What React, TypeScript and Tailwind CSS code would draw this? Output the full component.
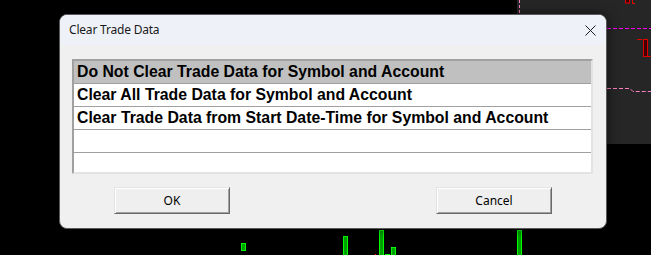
const rows = [
  "Do Not Clear Trade Data for Symbol and Account",
  "Clear All Trade Data for Symbol and Account",
  "Clear Trade Data from Start Date-Time for Symbol and Account",
  "",
];

function ChartBackdrop() {
  return (
    <svg
      className="absolute left-0 top-0"
      width={651}
      height={255}
      viewBox="0 0 651 255"
    >
      <line x1={519.5} y1={0} x2={519.5} y2={13} stroke="#ff80c0" strokeDasharray="3 2" />
      <line x1={607} y1={28.5} x2={651} y2={28.5} stroke="#ff00ff" strokeDasharray="4 2" />
      <polyline
        points="607,88.5 630,88.5 633,91.5 651,91.5"
        fill="none"
        stroke="#ff80c0"
        strokeDasharray="4 2"
      />
      {/* red candles */}
      <rect x={625.5} y={-2} width={4} height={5} fill="#400000" stroke="#e00000" />
      <line x1={632.5} y1={0} x2={632.5} y2={3} stroke="#e00000" />
      <line x1={632} y1={3.5} x2={635} y2={3.5} stroke="#e00000" />
      <line x1={637} y1={39.5} x2={642} y2={39.5} stroke="#e00000" />
      <rect x={643.5} y={39.5} width={4} height={17} fill="#400000" stroke="#e00000" />
      <line x1={648} y1={56.5} x2={651} y2={56.5} stroke="#e00000" />
      {/* volume bars */}
      <rect x={241.5} y={243.5} width={4} height={7} fill="#00a000" stroke="#00ff00" />
      <rect x={343.5} y={236.5} width={4} height={20} fill="#00a000" stroke="#00ff00" />
      <rect x={379.5} y={230.5} width={4} height={26} fill="#00a000" stroke="#00ff00" />
      <rect x={385.5} y={254.5} width={4} height={2} fill="#00a000" stroke="#00ff00" />
      <rect x={391.5} y={247.5} width={4} height={9} fill="#00a000" stroke="#00ff00" />
      <rect x={517.5} y={230.5} width={4} height={26} fill="#00a000" stroke="#00ff00" />
      <line x1={375.5} y1={254} x2={375.5} y2={255} stroke="#ff0000" />
    </svg>
  );
}

function WinButton({ label }: { label: string }) {
  return (
    <button className="w-[116px] h-[27px] bg-[#efefef] border border-t-[#e3e3e3] border-l-[#e3e3e3] border-b-[#696969] border-r-[#696969] shadow-[inset_1px_1px_0_#ffffff,inset_-1px_-1px_0_#a0a0a0] text-[12px] text-black font-['Noto_Sans',sans-serif] leading-none">
      {label}
    </button>
  );
}

export default function App() {
  return (
    <div className="relative w-[651px] h-[255px] bg-black overflow-hidden">
      <div className="absolute left-[517px] top-0 w-[134px] h-[144px] bg-[#262626]" />
      <ChartBackdrop />

      <div className="absolute left-[59px] top-[14px] w-[548px] h-[215px] rounded-[8px] overflow-hidden bg-[#f0f0f0] flex flex-col shadow-[0_0_12px_rgba(0,0,0,0.6)] border border-[#5a5a5a]">
        <div className="h-[30px] shrink-0 bg-[#eef2f8] flex items-center justify-between pl-[9px] pr-[10px]">
          <span className="text-[12px] text-[#1a1a1a] font-['Noto_Sans',sans-serif] tracking-[-0.2px]">
            Clear Trade Data
          </span>
          <svg width={11} height={11} viewBox="0 0 11 11">
            <path d="M0.5 0.5 L10.5 10.5 M10.5 0.5 L0.5 10.5" stroke="#1a1a1a" strokeWidth={1} />
          </svg>
        </div>

        <div className="flex flex-col pt-[14px] pl-[12px]">
          <div className="w-[521px] h-[115px] bg-white border-2 border-t-[#a0a0a0] border-l-[#a0a0a0] border-b-[#e3e3e3] border-r-[#e3e3e3] flex flex-col">
            {rows.map((r, i) => (
              <div
                key={i}
                className={`h-[23px] shrink-0 border-b border-[#a0a0a0] flex items-center pl-[3px] text-[15.8px] font-bold text-black font-['Liberation_Sans',Arial,sans-serif] whitespace-nowrap ${
                  i === 0 ? "bg-[#c0c0c0]" : "bg-white"
                }`}
              >
                {r}
              </div>
            ))}
            <div className="flex-1 bg-white" />
          </div>

          <div className="flex pl-[42px] gap-[206px] mt-[13px]">
            <WinButton label="OK" />
            <WinButton label="Cancel" />
          </div>
        </div>
      </div>
    </div>
  );
}
